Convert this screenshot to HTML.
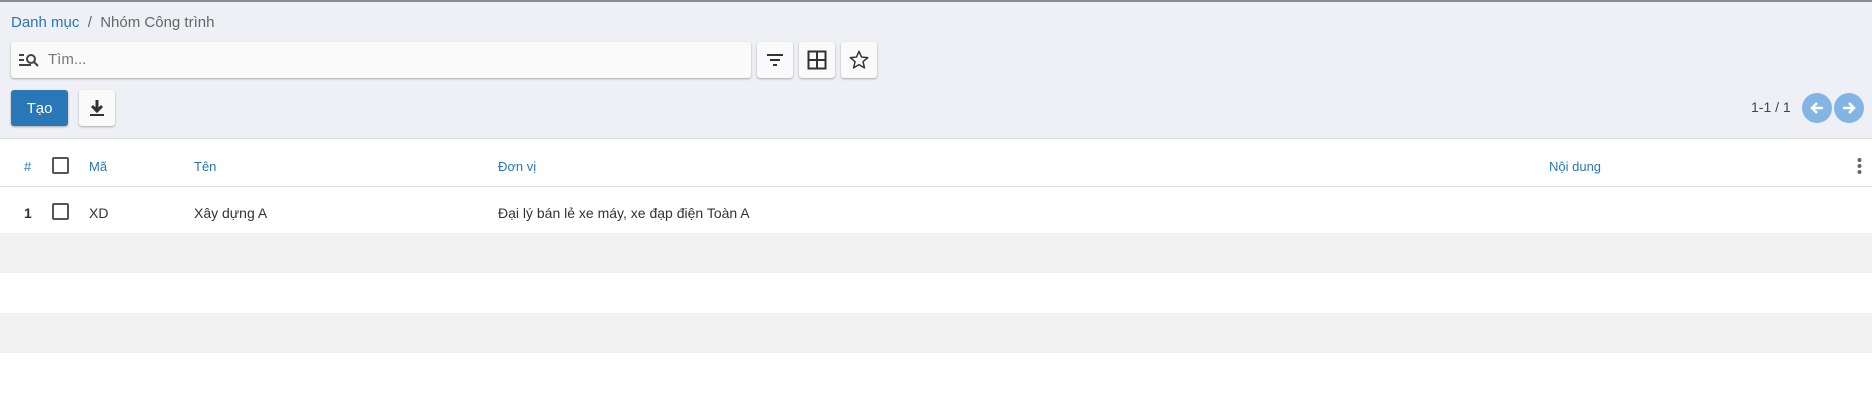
<!DOCTYPE html>
<html><head><meta charset="utf-8"><style>
*{box-sizing:border-box;margin:0;padding:0}
body{width:1872px;height:418px;background:#fff;font-family:"Liberation Sans",sans-serif;font-size:13px;color:#333;position:relative;overflow:hidden}
.top{position:absolute;left:0;top:0;width:1872px;height:139px;background:#eef0f5;border-top:2px solid #8a8d93;border-bottom:1px solid #dcdde2}
.abs{position:absolute}
.btn{position:absolute;background:#fafafa;border-radius:3px;box-shadow:0 1px 2px rgba(0,0,0,.3);display:flex;align-items:center;justify-content:center}
.blue{color:#2a77b7}
.th{position:absolute;top:159px;font-size:13px;color:#2a77b7}
.td{position:absolute;top:205px;font-size:14px;color:#333}
.cb{position:absolute;width:17px;height:17px;border:2px solid #555;border-radius:2px;background:#fff}
.circ{position:absolute;width:30px;height:30px;border-radius:50%;background:#82b5e3;display:flex;align-items:center;justify-content:center}
</style></head><body>
<div class="top"></div>
<div class="abs" style="left:11px;top:14px;font-size:15px"><span class="blue">Danh mục</span><span style="color:#666"> &nbsp;/ &nbsp;Nhóm Công trình</span></div>
<div class="btn" style="left:11px;top:42px;width:740px;height:36px;justify-content:flex-start">
<svg class="abs" style="left:7px;top:10px" width="22" height="16" viewBox="0 0 22 16"><path d="M1 3h5M1 8h5M1 13h12" stroke="#444" stroke-width="2"/><circle cx="13" cy="7" r="4" fill="none" stroke="#444" stroke-width="2"/><path d="M16 10l4 4" stroke="#444" stroke-width="2"/></svg>
<span class="abs" style="left:37px;top:9px;font-size:15px;color:#777">Tìm...</span></div>
<div class="btn" style="left:757px;top:42px;width:36px;height:36px"><svg width="18" height="14"><path d="M1 2h16M4 7h10M7 12h4" stroke="#333" stroke-width="2"/></svg></div>
<div class="btn" style="left:799px;top:42px;width:36px;height:36px"><svg width="20" height="20"><rect x="1.5" y="1.5" width="17" height="17" fill="none" stroke="#333" stroke-width="2"/><path d="M10 1v18M1 10h18" stroke="#333" stroke-width="2"/></svg></div>
<div class="btn" style="left:841px;top:42px;width:36px;height:36px"><svg width="22" height="22" viewBox="0 0 24 24"><path d="M12 2.5l2.8 6.3 6.8.6-5.2 4.5 1.6 6.7L12 17.1l-5.9 3.5 1.6-6.7-5.2-4.5 6.8-.6z" fill="none" stroke="#333" stroke-width="1.6" stroke-linejoin="round"/></svg></div>
<div class="btn" style="left:11px;top:90px;width:57px;height:36px;background:#2a77b7;color:#fff;font-size:15px">Tạo</div>
<div class="btn" style="left:79px;top:90px;width:36px;height:36px"><svg width="16" height="18"><path d="M8 1v10M3 7l5 5 5-5" stroke="#333" stroke-width="3" fill="none"/><path d="M1 16h14" stroke="#333" stroke-width="2"/></svg></div>
<div class="abs" style="left:1751px;top:99px;font-size:14px;color:#444">1-1 / 1</div>
<div class="circ" style="left:1802px;top:93px"><svg width="14" height="14"><path d="M13 7H3M7 2L2 7l5 5" stroke="#fff" stroke-width="2.5" fill="none"/></svg></div>
<div class="circ" style="left:1834px;top:93px"><svg width="14" height="14"><path d="M1 7h10M7 2l5 5-5 5" stroke="#fff" stroke-width="2.5" fill="none"/></svg></div>
<div class="abs" style="left:0;top:186px;width:1872px;height:1px;background:#ddd"></div>
<div class="abs" style="left:0;top:233px;width:1872px;height:40px;background:#f2f2f2"></div>
<div class="abs" style="left:0;top:313px;width:1872px;height:40px;background:#f2f2f2"></div>
<div class="th" style="left:24px">#</div>
<div class="cb" style="left:52px;top:157px"></div>
<div class="th" style="left:89px">Mã</div>
<div class="th" style="left:194px">Tên</div>
<div class="th" style="left:498px">Đơn vị</div>
<div class="th" style="left:1549px">Nội dung</div>
<svg class="abs" style="left:1857px;top:158px" width="5" height="16"><circle cx="2.5" cy="2" r="2" fill="#666"/><circle cx="2.5" cy="8" r="2" fill="#666"/><circle cx="2.5" cy="14" r="2" fill="#666"/></svg>
<div class="td" style="left:24px;font-weight:bold">1</div>
<div class="cb" style="left:52px;top:203px"></div>
<div class="td" style="left:89px">XD</div>
<div class="td" style="left:194px">Xây dựng A</div>
<div class="td" style="left:498px">Đại lý bán lẻ xe máy, xe đạp điện Toàn A</div>
</body></html>
